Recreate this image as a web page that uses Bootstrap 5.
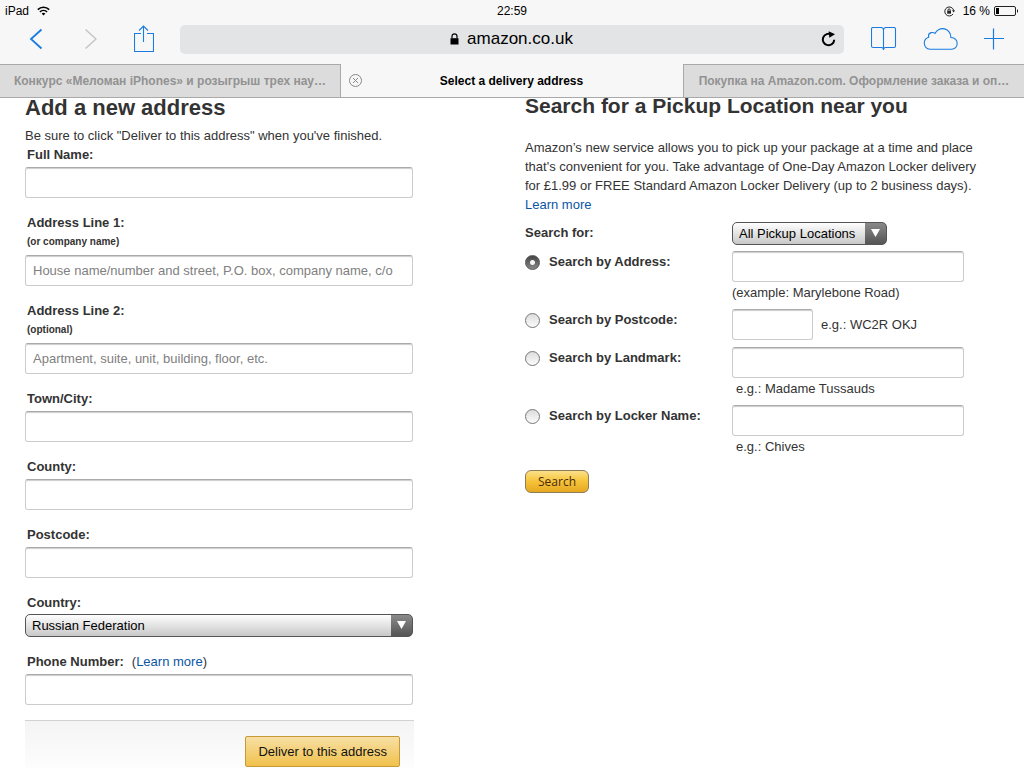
<!DOCTYPE html>
<html lang="en">
<head>
<meta charset="utf-8">
<meta name="viewport" content="width=device-width, initial-scale=1">
<title>Select a delivery address</title>
<link href="https://cdn.jsdelivr.net/npm/bootstrap@5.3.0/dist/css/bootstrap.min.css" rel="stylesheet">
<style>
  body { font: 13px/18px "Liberation Sans", Arial, sans-serif; color: #333; background: #fff; }
  a { color: #0a56a5; text-decoration: none; }
  svg { display: block; flex: none; }

  /* browser chrome */
  .chrome { background: #f7f7f7; color: #000; }
  .status-line { height: 22px; padding: 0 5px; font-size: 12px; }
  .status-line > div { flex: 1 1 0; }
  .toolbar { height: 42px; padding: 0 20px 8px 28px; }
  .tool { border: 0; background: none; padding: 0; color: #1a7ce0; }
  .tool-off { color: #c4c4c6; }
  .nav-tools { width: 152px; gap: 37px; }
  .side-tools { width: 160px; gap: 26px; padding-left: 27px; }
  .address-bar { height: 29px; border-radius: 5px; background: #e3e4e6; font-size: 17px; padding: 0 8px 0 22px; }
  .tab-strip { border-bottom: 1px solid #a9a9a9; height: 34px; font-size: 12px; font-weight: 700; }
  .tab { flex: 1 1 0; min-width: 0; color: #929292; background: #dcdcdc; border-top: 1px solid #a9a9a9; padding: 0 10px; text-align: center; }
  .tab-current { color: #000; background: #f7f7f7; border: solid #a9a9a9; border-width: 0 1px; padding: 0 14px 0 8px; }
  .tab a { color: inherit; }

  /* page */
  .pane-new { padding: 0 99px 0 25px; }
  .pane-search { padding: 0 34px 0 13px; }
  .pane-title { font-size: 22px; line-height: 20px; font-weight: 700; margin: 0; }
  .pane-search .pane-title { font-size: 21px; line-height: 16px; margin-bottom: 24px; }
  .intro { margin: 0 0 1px; padding-top: 9px; }
  .field { margin-bottom: 16px; }
  .field label, .choice label { font-weight: 700; }
  .choice label { padding-top: 2px; }
  .field label, .field .note { display: block; padding-left: 2px; }
  .field .note { font-size: 10px; font-weight: 700; line-height: 20px; }
  .text-box {
    display: block; width: 100%; height: 31px; margin-top: 3px; padding: 0 7px; font-size: 13px; color: #333;
    border: 1px solid #ccc; border-top-color: #aaa; border-radius: 3px; background: #fff;
    box-shadow: inset 0 2px 1px -1px #ccc;
  }
  .text-box::placeholder { color: #808080; opacity: 1; }
  .drop-down {
    appearance: none; display: block; height: 23px; padding: 0 30px 0 6px; font-size: 13px; line-height: 20px; color: #000;
    border: 1px solid #555; border-radius: 5px;
    background:
      url("data:image/svg+xml,%3Csvg xmlns='http://www.w3.org/2000/svg' width='9' height='9'%3E%3Cpath d='M0 0h9L4.500 8z' fill='%23fff'/%3E%3C/svg%3E") no-repeat right 6px top 6px,
      linear-gradient(#8a8a8a, #555) no-repeat right / 21px 100%,
      linear-gradient(#fefefe, #c8c8c8);
  }
  .field .drop-down { margin-top: 2px; }
  .form-foot { border-top: 1px solid #d2d2d2; background: linear-gradient(#f4f4f4, #fdfdfd); padding: 15px 14px 1px; margin: 15px -1px 0 0; }
  .btn-deliver { height: 31px; padding: 0 12px; font-size: 13px; line-height: 18px; color: #111; border: 1px solid #c89a35; border-radius: 2px; background: linear-gradient(#f7dfa5, #f0c14b); }
  .about { line-height: 19px; margin-bottom: 8px; }
  .choice { display: flex; margin-bottom: 7px; }
  .choice-first { margin-bottom: 6px; }
  .choice .text-box { margin: 0; }
  .choice-name { flex: 0 0 207px; display: flex; align-items: flex-start; }
  .choice-value { flex: 0 1 232px; min-width: 0; }
  .choice-value .hint { display: block; padding-top: 2px; line-height: 18px; }
  .choice-value .hint-in { padding-left: 4px; }
  .short-box { flex: 0 0 81px; }
  .dot {
    appearance: none; width: 15px; height: 15px; margin: 4px 9px 0 0; border: 1px solid #777; border-radius: 50%;
    background: linear-gradient(#dcdcdc, #fcfcfc);
  }
  .dot:checked { border-color: #555; background: radial-gradient(circle, #f4f4f4 2px, transparent 3px), linear-gradient(#444, #888); }
  .btn-search { height: 23px; width: 64px; padding: 0; margin-top: 7px; font: 12px/18px "Open Sans", sans-serif; color: #4a2a10; border: 1px solid #8d7c58; border-radius: 6px; background: linear-gradient(#fbe08a, #f7c63e 45%, #e5a820); }
</style>
</head>
<body>
<header class="chrome">
  <div class="status-line d-flex align-items-center">
    <div class="d-flex align-items-center gap-2">
      <span>iPad</span>
      <svg width="13" height="10" viewBox="0 0 13 10" fill="none" stroke="#000" stroke-width="1.6"><path d="M.8 3.600a8.200 8.200 0 0 1 11.400 0M2.900 5.900a5.200 5.200 0 0 1 7.200 0"/><path d="M6.500 9.600 4.600 7.600a2.700 2.700 0 0 1 3.800 0z" fill="#000" stroke="none"/></svg>
    </div>
    <div class="text-center">22:59</div>
    <div class="d-flex align-items-center justify-content-end">
      <svg class="me-2" width="11" height="11" viewBox="0 0 11 11" fill="none" stroke="#222"><path d="M9.600 4.200A4.500 4.500 0 1 0 9 8"/><path d="M8 4.200h3L9.600 6.400z" fill="#222" stroke="none"/><path d="M3.200 4.900h3.800v2.800H3.200z" fill="#222" stroke="none"/><path d="M4 5V4a1.100 1.100 0 0 1 2.200 0v1"/></svg>
      <span class="me-1">16 %</span>
      <svg width="25" height="10" viewBox="0 0 25 10"><rect x=".5" y=".5" width="21" height="9" rx="1.500" fill="none" stroke="#222"/><path d="M2 2h3v6H2z"/><path d="M23 3q2 2 0 4z"/></svg>
    </div>
  </div>
  <div class="toolbar d-flex align-items-center">
    <div class="nav-tools d-flex align-items-center">
      <button class="tool" type="button" aria-label="Back"><svg width="16" height="22" viewBox="0 0 16 22" fill="none" stroke="currentColor" stroke-width="1.800"><path d="M13.500 1.500 3 11l10.500 9.500"/></svg></button>
      <button class="tool tool-off" type="button" aria-label="Forward"><svg width="16" height="22" viewBox="0 0 16 22" fill="none" stroke="currentColor" stroke-width="1.500"><path d="M4.500 1.500 15 11 4.500 20.500"/></svg></button>
      <button class="tool" type="button" aria-label="Share"><svg width="20" height="28" viewBox="0 0 20 28" fill="none" stroke="currentColor" stroke-width="1.100"><path d="M7 8.500H.5v18h19v-18H13M9.500 17V1M5 5.500 9.500 1 14 5.500"/></svg></button>
    </div>
    <div class="address-bar d-flex align-items-center flex-fill">
      <div class="d-flex align-items-center justify-content-center flex-fill gap-2">
        <svg width="9" height="12" viewBox="0 0 9 12"><path d="M.5 5.200h8v6.300h-8z"/><path d="M2 5.500V3.300a2.500 2.500 0 0 1 5 0v2.200" fill="none" stroke="#000" stroke-width="1.200"/></svg>
        <span>amazon.co.uk</span>
      </div>
      <button class="tool text-black" type="button" aria-label="Reload"><svg width="15" height="16" viewBox="0 0 15 16" fill="none" stroke="currentColor" stroke-width="2"><path d="M10.500 3.700A5.700 5.700 0 1 0 13.200 8.700"/><path d="M7.700.3 14 3.200 8.300 6.700z" fill="currentColor" stroke="none"/></svg></button>
    </div>
    <div class="side-tools d-flex align-items-center">
      <button class="tool" type="button" aria-label="Bookmarks"><svg width="26" height="24" viewBox="0 0 26 24" fill="none" stroke="currentColor" stroke-width="1.100"><path d="M12.500 3Q12.500.5 10 .5H2Q.5.500.5 2v17Q.5 20.500 2 20.500h8.500q2 0 2 2.500M12.500 23V3Q12.500.5 15 .5h8q1.500 0 1.500 1.500v17q0 1.500-1.500 1.500h-8.500q-2 0-2 2.500"/></svg></button>
      <button class="tool" type="button" aria-label="iCloud tabs"><svg width="35" height="22" viewBox="0 0 35 22" fill="none" stroke="currentColor" stroke-width="1.100"><path d="M7 21.300A6.200 6.200 0 0 1 5.700 9.200Q4.800 5.500 8.300 4.600q2-.5 3.700.8A8.300 8.300 0 0 1 27.800 9.500q6.400.5 6.400 6.200-.4 5.100-5.700 5.600z"/></svg></button>
      <button class="tool" type="button" aria-label="New tab"><svg width="22" height="22" viewBox="0 0 22 22" fill="none" stroke="currentColor" stroke-width="1.200"><path d="M9.500 .5v21M-1 10.500h21"/></svg></button>
    </div>
  </div>
  <nav class="tab-strip d-flex" aria-label="Open tabs">
    <div class="tab d-flex align-items-center justify-content-center"><a class="text-truncate" href="#">Конкурс «Меломан iPhones» и розыгрыш трех нау…</a></div>
    <div class="tab tab-current d-flex align-items-center">
      <button class="tool" type="button" aria-label="Close tab"><svg width="13" height="13" viewBox="0 0 13 13" fill="none" stroke="#888"><circle cx="6.500" cy="6.500" r="6"/><path d="m4 4 5 5M9 4 4 9"/></svg></button>
      <a class="flex-fill pe-2" href="#">Select a delivery address</a>
    </div>
    <div class="tab d-flex align-items-center justify-content-center"><a class="text-truncate" href="#">Покупка на Amazon.com. Оформление заказа и оп…</a></div>
  </nav>
</header>

<main class="row g-0">
  <section class="col-md-6 pane-new">
    <form>
      <h1 class="pane-title">Add a new address</h1>
      <p class="intro">Be sure to click "Deliver to this address" when you've finished.</p>
      <div class="field"><label for="full-name">Full Name:</label><input class="text-box" id="full-name" type="text"></div>
      <div class="field"><label for="line1">Address Line 1:</label><span class="note">(or company name)</span><input class="text-box" id="line1" type="text" placeholder="House name/number and street, P.O. box, company name, c/o"></div>
      <div class="field"><label for="line2">Address Line 2:</label><span class="note">(optional)</span><input class="text-box" id="line2" type="text" placeholder="Apartment, suite, unit, building, floor, etc."></div>
      <div class="field"><label for="town">Town/City:</label><input class="text-box" id="town" type="text"></div>
      <div class="field"><label for="county">County:</label><input class="text-box" id="county" type="text"></div>
      <div class="field"><label for="postcode">Postcode:</label><input class="text-box" id="postcode" type="text"></div>
      <div class="field"><label for="country">Country:</label><select class="drop-down w-100" id="country"><option>Russian Federation</option></select></div>
      <div class="field mb-0"><div class="d-flex"><label for="phone">Phone Number:</label><span class="ps-2">(<a href="#">Learn more</a>)</span></div><input class="text-box" id="phone" type="tel"></div>
      <div class="form-foot text-end"><button class="btn btn-deliver" type="button">Deliver to this address</button></div>
    </form>
  </section>

  <section class="col-md-6 pane-search">
    <form>
      <h2 class="pane-title">Search for a Pickup Location near you</h2>
      <p class="about">Amazon’s new service allows you to pick up your package at a time and place that's convenient for you. Take advantage of One-Day Amazon Locker delivery for £1.99 or FREE Standard Amazon Locker Delivery (up to 2 business days).<br><a href="#">Learn more</a></p>
      <div class="choice choice-first">
        <div class="choice-name"><label for="kind">Search for:</label></div>
        <select class="drop-down" id="kind"><option>All Pickup Locations</option></select>
      </div>
      <div class="choice">
        <div class="choice-name"><input class="dot" type="radio" name="by" id="by-address" checked><label for="by-address">Search by Address:</label></div>
        <div class="choice-value"><input class="text-box" type="text" aria-label="Address"><span class="hint">(example: Marylebone Road)</span></div>
      </div>
      <div class="choice">
        <div class="choice-name"><input class="dot" type="radio" name="by" id="by-postcode"><label for="by-postcode">Search by Postcode:</label></div>
        <div class="choice-value d-flex align-items-center gap-2"><div class="short-box"><input class="text-box" type="text" aria-label="Postcode"></div><span>e.g.: WC2R OKJ</span></div>
      </div>
      <div class="choice">
        <div class="choice-name"><input class="dot" type="radio" name="by" id="by-landmark"><label for="by-landmark">Search by Landmark:</label></div>
        <div class="choice-value"><input class="text-box" type="text" aria-label="Landmark"><span class="hint hint-in">e.g.: Madame Tussauds</span></div>
      </div>
      <div class="choice">
        <div class="choice-name"><input class="dot" type="radio" name="by" id="by-locker"><label for="by-locker">Search by Locker Name:</label></div>
        <div class="choice-value"><input class="text-box" type="text" aria-label="Locker name"><span class="hint hint-in">e.g.: Chives</span></div>
      </div>
      <button class="btn-search" type="button">Search</button>
    </form>
  </section>
</main>
<script src="https://cdn.jsdelivr.net/npm/bootstrap@5.3.0/dist/js/bootstrap.bundle.min.js"></script>
</body>
</html>
